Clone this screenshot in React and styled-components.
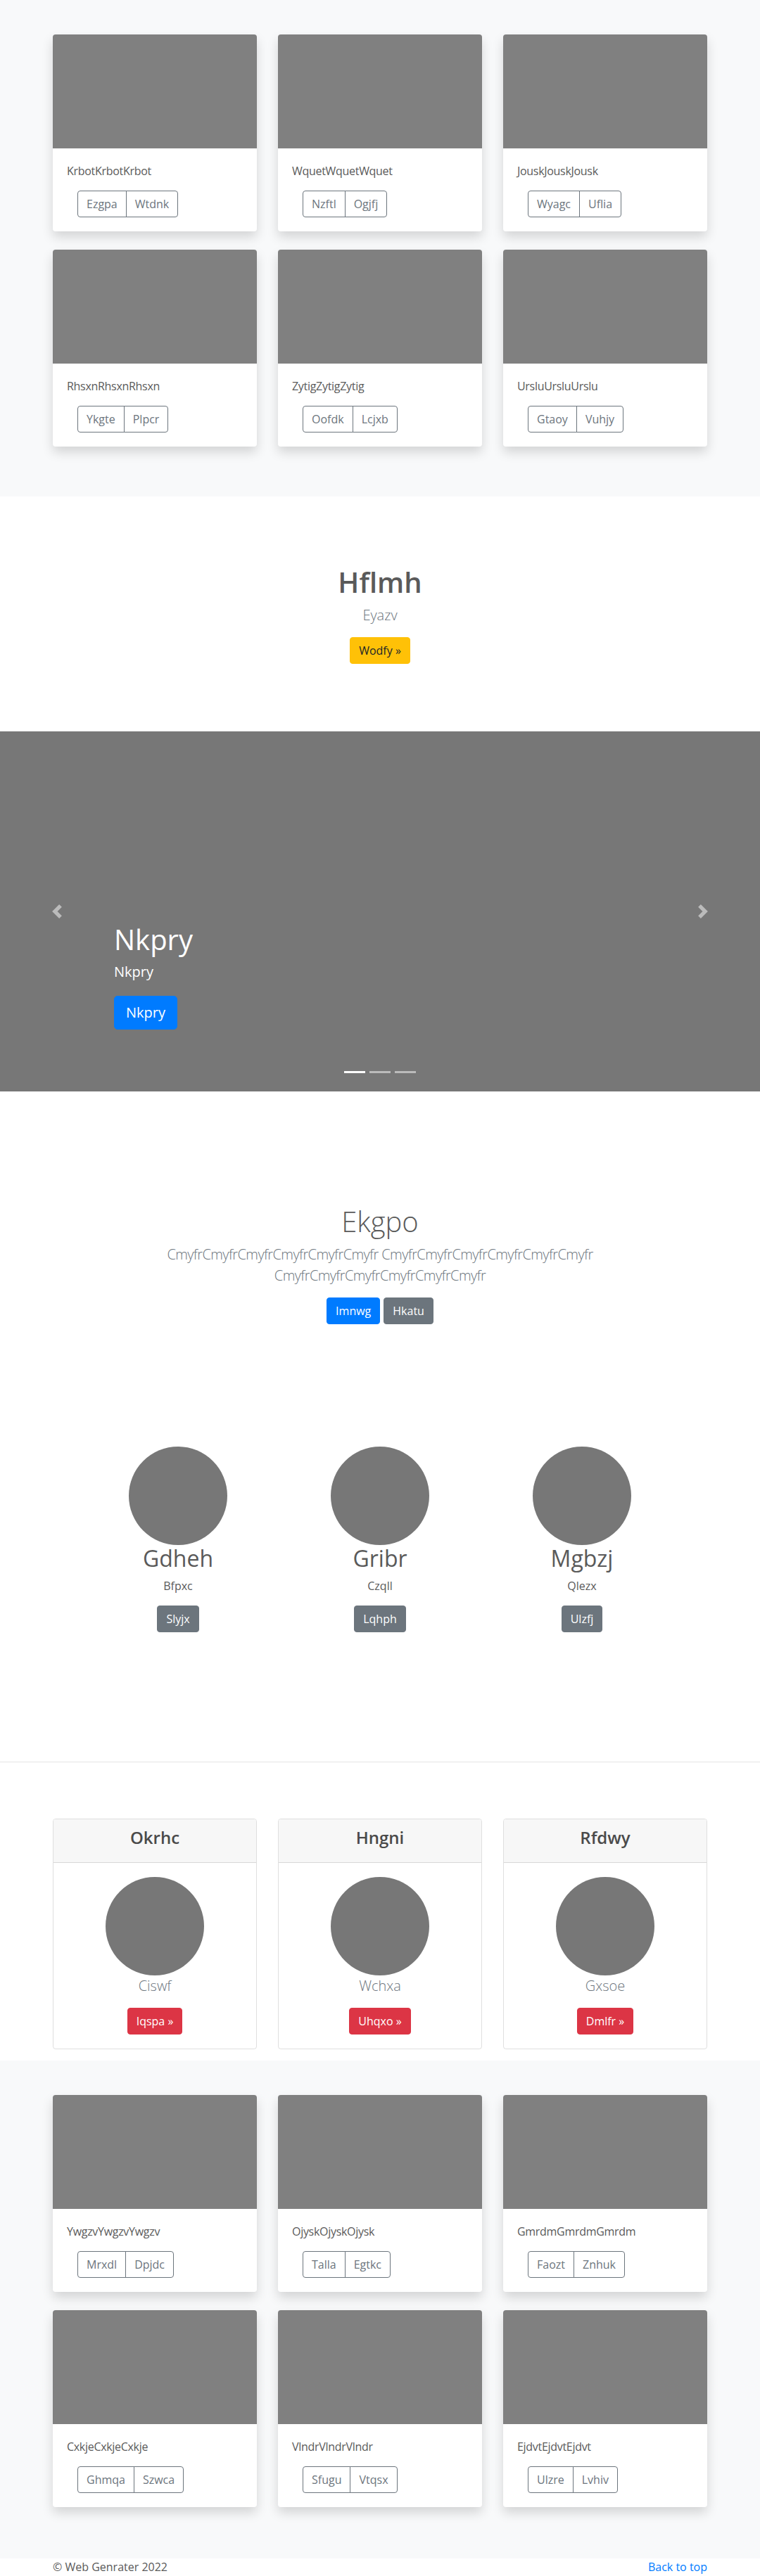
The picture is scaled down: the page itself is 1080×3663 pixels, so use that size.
import React from 'react';
import styled, { createGlobalStyle } from 'styled-components';

const GlobalStyle = createGlobalStyle`
  * { box-sizing: border-box; }
  body {
    margin: 0;
    font-family: "Open Sans", "Noto Sans", sans-serif;
    font-size: 16px;
    line-height: 1.5;
    color: #5a5a5a;
    background: #fff;
  }
  h1, h2, h4, p { margin: 0; }
`;

const albumTop = [
  { text: 'KrbotKrbotKrbot', a: 'Ezgpa', b: 'Wtdnk' },
  { text: 'WquetWquetWquet', a: 'Nzftl', b: 'Ogjfj' },
  { text: 'JouskJouskJousk', a: 'Wyagc', b: 'Uflia' },
  { text: 'RhsxnRhsxnRhsxn', a: 'Ykgte', b: 'Plpcr' },
  { text: 'ZytigZytigZytig', a: 'Oofdk', b: 'Lcjxb' },
  { text: 'UrsluUrsluUrslu', a: 'Gtaoy', b: 'Vuhjy' },
];

const albumBottom = [
  { text: 'YwgzvYwgzvYwgzv', a: 'Mrxdl', b: 'Dpjdc' },
  { text: 'OjyskOjyskOjysk', a: 'Talla', b: 'Egtkc' },
  { text: 'GmrdmGmrdmGmrdm', a: 'Faozt', b: 'Znhuk' },
  { text: 'CxkjeCxkjeCxkje', a: 'Ghmqa', b: 'Szwca' },
  { text: 'VlndrVlndrVlndr', a: 'Sfugu', b: 'Vtqsx' },
  { text: 'EjdvtEjdvtEjdvt', a: 'Ulzre', b: 'Lvhiv' },
];

const people = [
  { name: 'Gdheh', sub: 'Bfpxc', btn: 'Slyjx' },
  { name: 'Gribr', sub: 'Czqll', btn: 'Lqhph' },
  { name: 'Mgbzj', sub: 'Qlezx', btn: 'Ulzfj' },
];

const plans = [
  { title: 'Okrhc', sub: 'Ciswf', btn: 'Iqspa »' },
  { title: 'Hngni', sub: 'Wchxa', btn: 'Uhqxo »' },
  { title: 'Rfdwy', sub: 'Gxsoe', btn: 'Dmlfr »' },
];

const Album = ({ items, $bottom }) => (
  <GraySection $bottom={$bottom}>
    <Container>
      <CardGrid>
        {items.map((c) => (
          <Card key={c.text}>
            <Thumb />
            <CardBody>
              <CardText>{c.text}</CardText>
              <BtnGroup>
                <OutlineBtn>{c.a}</OutlineBtn>
                <OutlineBtn>{c.b}</OutlineBtn>
              </BtnGroup>
            </CardBody>
          </Card>
        ))}
      </CardGrid>
    </Container>
  </GraySection>
);

const Chevron = ({ flip }) => (
  <svg width="20" height="20" viewBox="0 0 8 8" fill="#fff" style={{ opacity: 0.5, transform: flip ? 'scaleX(-1)' : 'none' }}>
    <path d="M5.25 0l-4 4 4 4 1.5-1.5-2.5-2.5 2.5-2.5-1.5-1.5z" />
  </svg>
);

export default function App() {
  return (
    <>
      <GlobalStyle />
      <Album items={albumTop} $bottom={71} />

      <Promo>
        <PromoTitle>Hflmh</PromoTitle>
        <Lead>Eyazv</Lead>
        <Btn $bg="#ffc107" $fg="#212529">Wodfy »</Btn>
      </Promo>

      <Carousel>
        <Control $side="left"><Chevron /></Control>
        <Control $side="right"><Chevron flip /></Control>
        <Caption>
          <CaptionTitle>Nkpry</CaptionTitle>
          <CaptionText>Nkpry</CaptionText>
          <LargeBtn>Nkpry</LargeBtn>
        </Caption>
        <Indicators>
          <Indicator $active />
          <Indicator />
          <Indicator />
        </Indicators>
      </Carousel>

      <Jumbo>
        <JumboTitle>Ekgpo</JumboTitle>
        <JumboLead>
          CmyfrCmyfrCmyfrCmyfrCmyfrCmyfr CmyfrCmyfrCmyfrCmyfrCmyfrCmyfr CmyfrCmyfrCmyfrCmyfrCmyfrCmyfr
        </JumboLead>
        <ButtonRow>
          <Btn $bg="#007bff">Imnwg</Btn>
          <Btn $bg="#6c757d">Hkatu</Btn>
        </ButtonRow>
      </Jumbo>

      <Marketing>
        {people.map((p) => (
          <Person key={p.name}>
            <Circle />
            <PersonName>{p.name}</PersonName>
            <PersonSub>{p.sub}</PersonSub>
            <Btn $bg="#6c757d">{p.btn}</Btn>
          </Person>
        ))}
      </Marketing>

      <Divider />

      <Pricing>
        <Container>
          <PlanGrid>
            {plans.map((p) => (
              <PlanCard key={p.title}>
                <PlanHeader>
                  <PlanTitle>{p.title}</PlanTitle>
                </PlanHeader>
                <PlanBody>
                  <Circle />
                  <Lead>{p.sub}</Lead>
                  <Btn $bg="#dc3545">{p.btn}</Btn>
                </PlanBody>
              </PlanCard>
            ))}
          </PlanGrid>
        </Container>
      </Pricing>

      <Album items={albumBottom} $bottom={73} />

      <Footer>
        <FooterInner>
          <span>© Web Genrater 2022</span>
          <TopLink href="#">Back to top</TopLink>
        </FooterInner>
      </Footer>
    </>
  );
}

const Container = styled.div`
  width: 930px;
  margin: 0 auto;
`;

const GraySection = styled.section`
  background: #f8f9fa;
  padding: 49px 0 ${(p) => p.$bottom}px;
`;

const CardGrid = styled.div`
  display: grid;
  grid-template-columns: repeat(3, 1fr);
  column-gap: 30px;
  row-gap: 26px;
`;

const Card = styled.div`
  background: #fff;
  border-radius: 4px;
  overflow: hidden;
  box-shadow: 0 8px 16px rgba(0, 0, 0, 0.15);
`;

const Thumb = styled.div`
  height: 162px;
  background: #808080;
`;

const CardBody = styled.div`
  padding: 20px;
`;

const CardText = styled.p`
  margin-bottom: 16px;
  font-size: 16px;
  letter-spacing: -0.3px;
`;

const BtnGroup = styled.div`
  display: flex;
  width: max-content;
  margin-left: 15px;
`;

const OutlineBtn = styled.button`
  font-family: inherit;
  font-size: 16px;
  line-height: 24px;
  padding: 6px 12px;
  background: transparent;
  color: #6c757d;
  border: 1px solid #6c757d;
  &:first-child { border-radius: 4px 0 0 4px; }
  &:last-child { border-radius: 0 4px 4px 0; margin-left: -1px; }
`;

const Btn = styled.button`
  display: inline-block;
  vertical-align: top;
  font-family: inherit;
  font-size: 16px;
  line-height: 24px;
  padding: 6px 12px;
  border: 1px solid ${(p) => p.$bg};
  border-radius: 4px;
  background: ${(p) => p.$bg};
  color: ${(p) => p.$fg || '#fff'};
`;

const Promo = styled.section`
  padding: 98px 0 96px;
  text-align: center;
`;

const PromoTitle = styled.h1`
  font-size: 40px;
  line-height: 1.2;
  font-weight: 600;
  margin-bottom: 8px;
`;

const Lead = styled.p`
  font-size: 20px;
  line-height: 30px;
  font-weight: 300;
  color: #6c757d;
  margin-bottom: 16px;
`;

const Carousel = styled.section`
  position: relative;
  height: 512px;
  background: #777;
`;

const Control = styled.div`
  position: absolute;
  top: 0;
  bottom: 0;
  ${(p) => p.$side}: 0;
  width: 15%;
  display: flex;
  align-items: center;
  justify-content: center;
`;

const Caption = styled.div`
  position: absolute;
  left: 15%;
  right: 15%;
  bottom: 48px;
  padding: 20px 0;
  color: #fff;
`;

const CaptionTitle = styled.h1`
  font-size: 40px;
  line-height: 1.2;
  font-weight: 500;
  margin-bottom: 8px;
`;

const CaptionText = styled.p`
  font-size: 20px;
  line-height: 28px;
  margin-bottom: 20px;
`;

const LargeBtn = styled.button`
  font-family: inherit;
  font-size: 20px;
  line-height: 30px;
  padding: 8px 16px;
  border: 1px solid #007bff;
  border-radius: 5px;
  background: #007bff;
  color: #fff;
  margin-bottom: 20px;
`;

const Indicators = styled.div`
  position: absolute;
  left: 0;
  right: 0;
  bottom: 26px;
  display: flex;
  justify-content: center;
  gap: 6px;
`;

const Indicator = styled.span`
  width: 30px;
  height: 3px;
  background: #fff;
  opacity: ${(p) => (p.$active ? 1 : 0.5)};
`;

const Jumbo = styled.section`
  padding: 161px 0 71px;
  text-align: center;
`;

const JumboTitle = styled.h1`
  font-size: 40px;
  line-height: 1.2;
  font-weight: 300;
  margin-bottom: 8px;
`;

const JumboLead = styled(Lead)`
  width: 640px;
  margin: 0 auto 16px;
  letter-spacing: -0.6px;
`;

const ButtonRow = styled.div`
  display: flex;
  justify-content: center;
  gap: 5px;
  margin-top: 8px;
`;

const Marketing = styled.section`
  width: 861px;
  margin: 0 auto;
  padding: 103px 0 160px;
  display: grid;
  grid-template-columns: repeat(3, 1fr);
`;

const Person = styled.div`
  text-align: center;
  margin-bottom: 24px;
`;

const Circle = styled.div`
  width: 140px;
  height: 140px;
  border-radius: 50%;
  background: #777;
  margin: 0 auto;
`;

const PersonName = styled.h2`
  font-size: 32px;
  line-height: 1.2;
  font-weight: 400;
  margin-bottom: 8px;
`;

const PersonSub = styled.p`
  margin-bottom: 16px;
`;

const Divider = styled.hr`
  margin: 0;
  border: 0;
  border-top: 1px solid #e5e5e5;
`;

const Pricing = styled.section`
  padding: 80px 0 16px;
`;

const PlanGrid = styled.div`
  display: grid;
  grid-template-columns: repeat(3, 1fr);
  column-gap: 30px;
`;

const PlanCard = styled.div`
  border: 1px solid rgba(0, 0, 0, 0.125);
  border-radius: 4px;
  text-align: center;
  overflow: hidden;
`;

const PlanHeader = styled.div`
  background: #f7f7f7;
  border-bottom: 1px solid rgba(0, 0, 0, 0.125);
  padding: 12px 20px;
`;

const PlanTitle = styled.h4`
  font-size: 24px;
  line-height: 1.2;
  font-weight: 600;
  color: #4a4a4a;
  margin-bottom: 8px;
`;

const PlanBody = styled.div`
  padding: 20px;
`;

const Footer = styled.footer`
  height: 24px;
  background: #fff;
`;

const FooterInner = styled.div`
  width: 930px;
  margin: 0 auto;
  display: flex;
  justify-content: space-between;
  line-height: 24px;
`;

const TopLink = styled.a`
  color: #007bff;
  text-decoration: none;
`;
